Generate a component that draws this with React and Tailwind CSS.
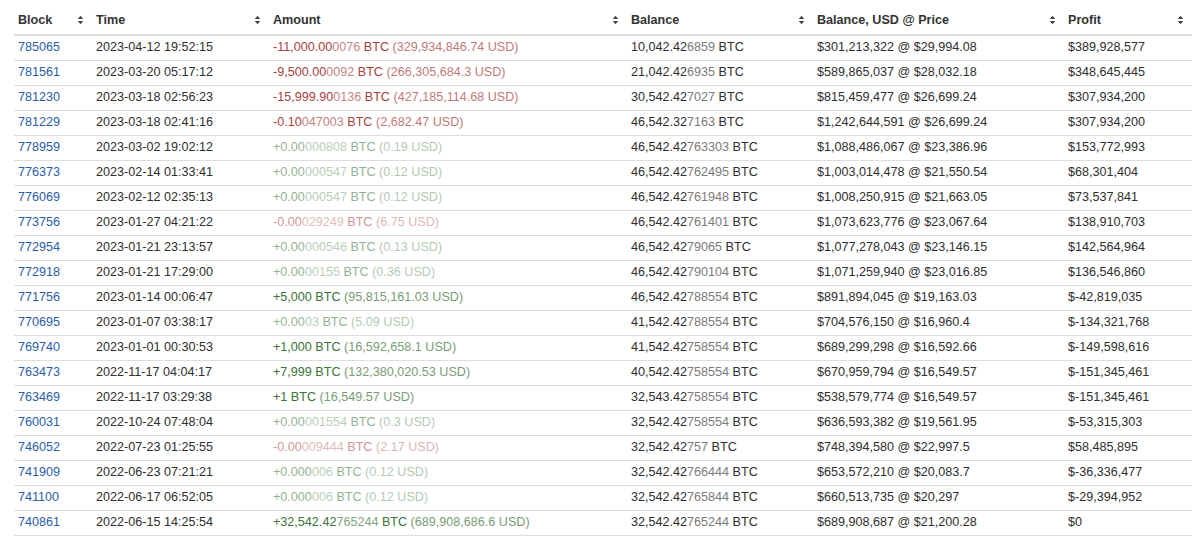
import React from "react";

const rows = [
  ["785065", "2023-04-12 19:52:15", "-", "11,000.00", "0076", "329,934,846.74", "10,042.42", "6859", "$301,213,322 @ $29,994.08", "$389,928,577", 0],
  ["781561", "2023-03-20 05:17:12", "-", "9,500.00", "0092", "266,305,684.3", "21,042.42", "6935", "$589,865,037 @ $28,032.18", "$348,645,445", 0],
  ["781230", "2023-03-18 02:56:23", "-", "15,999.90", "0136", "427,185,114.68", "30,542.42", "7027", "$815,459,477 @ $26,699.24", "$307,934,200", 0],
  ["781229", "2023-03-18 02:41:16", "-", "0.10", "047003", "2,682.47", "46,542.32", "7163", "$1,242,644,591 @ $26,699.24", "$307,934,200", 0],
  ["778959", "2023-03-02 19:02:12", "+", "0.00", "000808", "0.19", "46,542.42", "763303", "$1,088,486,067 @ $23,386.96", "$153,772,993", 1],
  ["776373", "2023-02-14 01:33:41", "+", "0.00", "000547", "0.12", "46,542.42", "762495", "$1,003,014,478 @ $21,550.54", "$68,301,404", 1],
  ["776069", "2023-02-12 02:35:13", "+", "0.00", "000547", "0.12", "46,542.42", "761948", "$1,008,250,915 @ $21,663.05", "$73,537,841", 1],
  ["773756", "2023-01-27 04:21:22", "-", "0.00", "029249", "6.75", "46,542.42", "761401", "$1,073,623,776 @ $23,067.64", "$138,910,703", 1],
  ["772954", "2023-01-21 23:13:57", "+", "0.00", "000546", "0.13", "46,542.42", "79065", "$1,077,278,043 @ $23,146.15", "$142,564,964", 1],
  ["772918", "2023-01-21 17:29:00", "+", "0.00", "00155", "0.36", "46,542.42", "790104", "$1,071,259,940 @ $23,016.85", "$136,546,860", 1],
  ["771756", "2023-01-14 00:06:47", "+", "5,000", "", "95,815,161.03", "46,542.42", "788554", "$891,894,045 @ $19,163.03", "$-42,819,035", 0],
  ["770695", "2023-01-07 03:38:17", "+", "0.00", "03", "5.09", "41,542.42", "788554", "$704,576,150 @ $16,960.4", "$-134,321,768", 1],
  ["769740", "2023-01-01 00:30:53", "+", "1,000", "", "16,592,658.1", "41,542.42", "758554", "$689,299,298 @ $16,592.66", "$-149,598,616", 0],
  ["763473", "2022-11-17 04:04:17", "+", "7,999", "", "132,380,020.53", "40,542.42", "758554", "$670,959,794 @ $16,549.57", "$-151,345,461", 0],
  ["763469", "2022-11-17 03:29:38", "+", "1", "", "16,549.57", "32,543.42", "758554", "$538,579,774 @ $16,549.57", "$-151,345,461", 0],
  ["760031", "2022-10-24 07:48:04", "+", "0.00", "001554", "0.3", "32,542.42", "758554", "$636,593,382 @ $19,561.95", "$-53,315,303", 1],
  ["746052", "2022-07-23 01:25:55", "-", "0.00", "009444", "2.17", "32,542.42", "757", "$748,394,580 @ $22,997.5", "$58,485,895", 1],
  ["741909", "2022-06-23 07:21:21", "+", "0.000", "006", "0.12", "32,542.42", "766444", "$653,572,210 @ $20,083.7", "$-36,336,477", 1],
  ["741100", "2022-06-17 06:52:05", "+", "0.000", "006", "0.12", "32,542.42", "765844", "$660,513,735 @ $20,297", "$-29,394,952", 1],
  ["740861", "2022-06-15 14:25:54", "+", "32,542.42", "765244", "689,908,686.6", "32,542.42", "765244", "$689,908,687 @ $21,200.28", "$0", 0],
];

function SortIcon() {
  return (
    <svg width="7" height="10" viewBox="0 0 7 10" className="shrink-0">
      <path d="M3.5 0.8 L6.3 4 L0.7 4 Z" fill="#444" />
      <path d="M3.5 9.2 L6.3 6 L0.7 6 Z" fill="#444" />
    </svg>
  );
}

const headers = ["Block", "Time", "Amount", "Balance", "Balance, USD @ Price", "Profit"];
const widths = ["w-[78px]", "w-[177px]", "w-[358px]", "w-[186px]", "w-[251px]", "w-[128px]"];

export default function App() {
  return (
    <div
      className="w-[1200px] h-[544px] bg-white overflow-hidden pt-[7px] pl-[14px] text-[12.6px] text-[#333]"
      style={{ fontFamily: '"Liberation Sans", Arial, Helvetica, sans-serif' }}
    >
      <table className="table-fixed border-collapse w-[1178px]">
        <thead>
          <tr className="h-[28px] border-b-2 border-[#dcdcdc]">
            {headers.map((h, i) => (
              <th key={h} className={`${widths[i]} pl-[4px] pr-[8px] p-0 text-left font-bold text-[#333] align-middle`}>
                <div className="flex items-center justify-between">
                  <span>{h}</span>
                  <SortIcon />
                </div>
              </th>
            ))}
          </tr>
        </thead>
        <tbody>
          {rows.map((r) => {
            const neg = r[2] === "-";
            const color = neg ? "text-[#a8403d]" : "text-[#3b7338]";
            return (
              <tr key={r[0] + r[1]} className="h-[25px] border-b border-[#dedede]">
                <td className="pl-[4px] p-0 text-[#2a5caa] align-middle">{r[0]}</td>
                <td className="pl-[4px] p-0 align-middle text-[#2e2e2e]">{r[1]}</td>
                <td className="pl-[4px] p-0 align-middle whitespace-nowrap">
                  <span className={`${color} ${r[10] ? "opacity-55" : ""}`}>
                    {r[2]}
                    {r[3]}
                    <span className="opacity-65">{r[4]}</span> BTC{" "}
                    <span className="opacity-70">({r[5]} USD)</span>
                  </span>
                </td>
                <td className="pl-[4px] p-0 align-middle whitespace-nowrap text-[#2e2e2e]">
                  {r[6]}
                  <span className="text-[#7a7a7a]">{r[7]}</span> BTC
                </td>
                <td className="pl-[4px] p-0 align-middle whitespace-nowrap text-[#2e2e2e]">{r[8]}</td>
                <td className="pl-[4px] p-0 align-middle whitespace-nowrap text-[#2e2e2e]">{r[9]}</td>
              </tr>
            );
          })}
        </tbody>
      </table>
    </div>
  );
}
